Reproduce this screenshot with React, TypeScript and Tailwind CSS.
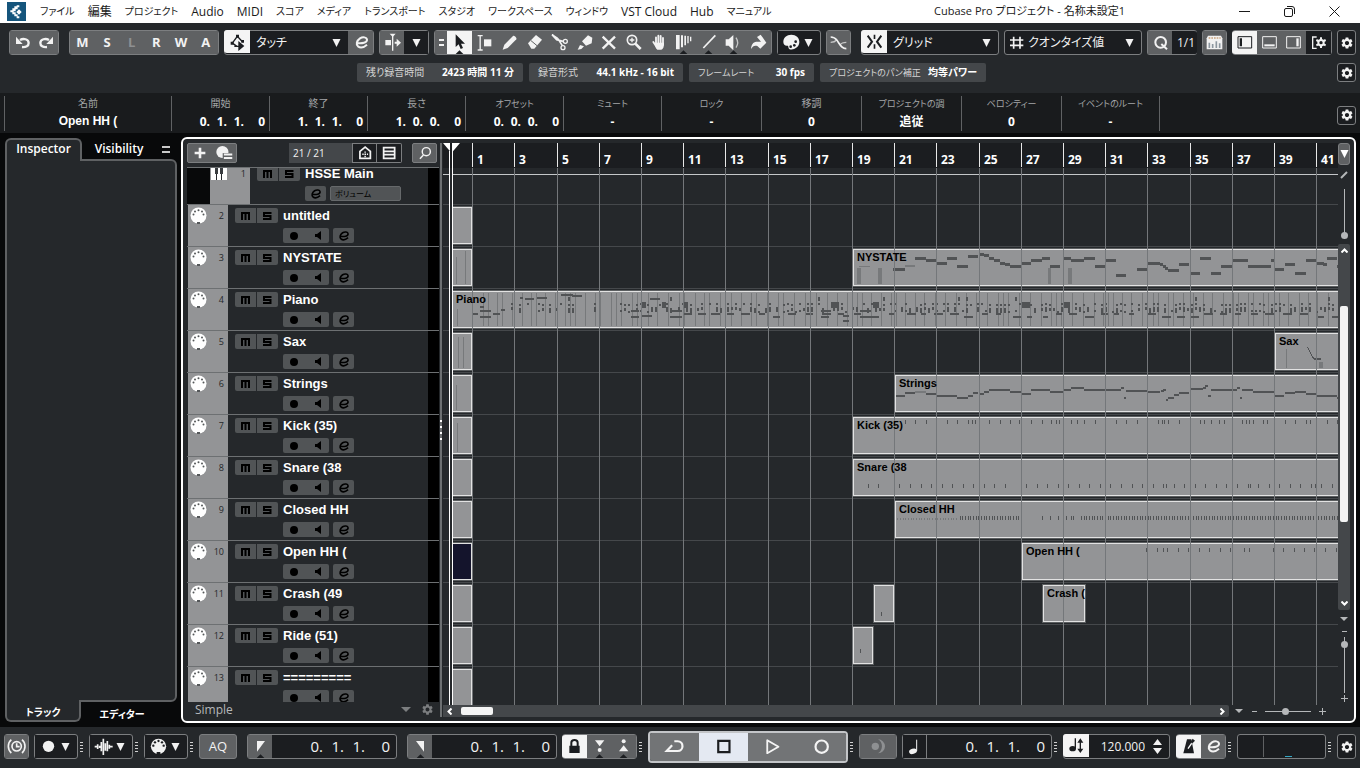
import React from 'react';
import clsx from 'clsx';
import { MdSettings } from 'react-icons/md';

interface Track {
  id: number;
  name: string;
}

interface Clip {
  lane: number;
  left: number;
  width?: number; // open-ended clips run to the right edge
  label?: string;
  selected?: boolean;
}

type Note = [x: number, width: number, y: number];

const MENU = [
  'ファイル', '編集', 'プロジェクト', 'Audio', 'MIDI', 'スコア', 'メディア', 'トランスポート',
  'スタジオ', 'ワークスペース', 'ウィンドウ', 'VST Cloud', 'Hub', 'マニュアル',
];

const TRACKS: Track[] = [
  { id: 2, name: 'untitled' },
  { id: 3, name: 'NYSTATE' },
  { id: 4, name: 'Piano' },
  { id: 5, name: 'Sax' },
  { id: 6, name: 'Strings' },
  { id: 7, name: 'Kick (35)' },
  { id: 8, name: 'Snare (38' },
  { id: 9, name: 'Closed HH' },
  { id: 10, name: 'Open HH (' },
  { id: 11, name: 'Crash (49' },
  { id: 12, name: 'Ride (51)' },
  { id: 13, name: '=========' },
];

// Timeline geometry, in pixels
const LANE_TOP = 37;
const LANE_H = 42;
const laneY = (track: number) => LANE_TOP + (track - 2) * LANE_H;
const BARS = Array.from({ length: 21 }, (_, i) => ({ bar: i * 2 + 1, x: Math.round(29.2 + i * 42.2) }));

const CLIPS: Clip[] = [
  ...[2, 3, 5, 6, 7, 8, 9, 10, 11, 12, 13].map((lane) => ({ lane, left: 9, width: 20, selected: lane === 10 })),
  { lane: 3, left: 410, label: 'NYSTATE' },
  { lane: 4, left: 9, label: 'Piano' },
  { lane: 5, left: 832, label: 'Sax' },
  { lane: 6, left: 452, label: 'Strings' },
  { lane: 7, left: 410, label: 'Kick (35)' },
  { lane: 8, left: 410, label: 'Snare (38' },
  { lane: 9, left: 452, label: 'Closed HH' },
  { lane: 10, left: 579, label: 'Open HH (' },
  { lane: 11, left: 431, width: 20 },
  { lane: 11, left: 600, width: 42, label: 'Crash (' },
  { lane: 12, left: 410, width: 20 },
];

const NYSTATE: Note[] = [
  [-21, 36, 418], [45, 33, 385], [78, 30, 391], [110, 30, 400], [141, 30, 385], [172, 32, 409], [204, 31, 379],
  [238, 14, 373], [252, 16, 376], [267, 16, 385], [283, 16, 391], [300, 15, 400], [314, 15, 403], [330, 33, 409],
  [363, 30, 400], [393, 33, 391], [426, 24, 385], [450, 30, 409], [489, 24, 385], [513, 39, 391], [552, 33, 385],
  [585, 30, 409], [615, 33, 391], [648, 30, 436], [711, 30, 418], [742, 38, 400], [780, 8, 403], [788, 10, 409],
  [795, 9, 415], [804, 33, 421], [837, 30, 403], [870, 30, 430], [900, 33, 385], [933, 30, 430], [963, 33, 409],
  [997, 47, 391], [1044, 69, 409], [1113, 9, 391], [1122, 30, 418], [1155, 30, 403], [1185, 33, 430],
  [1218, 31, 391], [1250, 22, 400], [1270, 11, 404], [1281, 30, 385], [1311, 5, 409],
];

const STRINGS: Note[] = [
  [168, 27, 77], [195, 31, 70], [258, 31, 71], [289, 62, 78], [351, 33, 84], [384, 15, 77], [399, 15, 69],
  [418, 15, 71], [432, 15, 65], [447, 63, 60], [510, 34, 65], [544, 29, 72], [573, 57, 60], [630, 39, 65],
  [669, 24, 60], [693, 39, 53], [732, 111, 60], [843, 9, 53], [852, 6, 83], [858, 63, 63], [921, 39, 65],
  [963, 8, 63], [970, 8, 59], [978, 6, 90], [984, 18, 84], [1002, 15, 74], [1017, 30, 69], [1050, 39, 56],
  [1089, 8, 53], [1095, 9, 47], [1104, 9, 77], [1113, 78, 60], [1191, 9, 53], [1200, 6, 84], [1206, 33, 60],
  [1239, 63, 65], [1303, 29, 78], [1335, 30, 69], [1365, 33, 65], [1398, 30, 71], [1429, 62, 78], [1490, 4, 84],
];

const steps = (from: number, to: number, step: number) =>
  Array.from({ length: Math.floor((to - from) / step) + 1 }, (_, i) => from + i * step);

const HITS: { lane: number; y: number; x: number[] }[] = [
  {
    lane: 7, y: 5,
    x: [196, 226, 259, 289, 322, 352, 385, 397, 406, 448, 481, 511, 538, 543, 574, 607, 634, 649, 657, 670, 694, 712,
      733, 766, 796, 829, 859, 892, 922, 955, 967, 973, 985, 1018, 1051, 1081, 1093, 1114, 1138, 1153, 1177, 1207,
      1219, 1228, 1240, 1270, 1282, 1303, 1336, 1366, 1399, 1411, 1429, 1462, 1492],
  },
  {
    lane: 8, y: 27,
    x: [85, 115, 178, 211, 244, 274, 307, 337, 370, 400, 433, 463, 496, 559, 592, 622, 655, 685, 718, 748, 781, 811,
      844, 877, 907, 940, 970, 979, 1003, 1033, 1066, 1096, 1129, 1159, 1192, 1225, 1231, 1255, 1288, 1318, 1351,
      1381, 1414, 1426, 1444, 1477],
  },
  { lane: 9, y: 17, x: [...steps(360, 536, 8), 607, 631, 655, 670, 679, 694, 700, ...steps(724, 1492, 8)] },
  {
    lane: 10, y: 7,
    x: [919, 952, 970, 982, 1015, 1045, 1078, 1108, 1141, 1171, 1213, 1228, 1300, 1330, 1363, 1393, 1423, 1456, 1489],
  },
  { lane: 11, y: 29, x: [124] },
  { lane: 12, y: 24, x: [61] },
];

// Repeatable pseudo random piano part: pedal lines, chords and a bass line
function buildPiano() {
  let seed = 11;
  const rand = () => {
    seed = (seed * 16807) % 2147483647;
    return seed / 2147483647;
  };
  const pedal: number[] = [];
  const notes: { x: number; y: number; w: number; h: number }[] = [];
  for (let x = 40; x < 895; x += rand() < 0.25 ? 5 : 9 + Math.floor(rand() * 3)) pedal.push(x);
  for (let x = 57; x < 893; x += rand() < 0.3 ? 7 : 4) {
    const sparse = x < 190 && rand() < 0.5;
    const top = 14 + Math.floor(rand() * 2);
    [top, top + 4, top + 7].forEach((y, i) => {
      if (!sparse && rand() < 0.68) notes.push({ x, y, w: 2, h: i === 1 ? 3 : 2 });
    });
    if (rand() < 0.05) notes.push({ x, y: 8, w: 2, h: 4 });
  }
  for (let x = 240; x < 890; x += 13 + Math.floor(rand() * 6)) {
    notes.push({ x, y: rand() < 0.6 ? 24 : 27, w: 5 + Math.floor(rand() * 5), h: 2 });
  }
  [
    [29, 24, 6], [37, 17, 4], [37, 21, 11], [37, 27, 11], [50, 24, 7], [58, 20, 4], [77, 8, 3], [82, 9, 9], [94, 8, 10],
    [118, 5, 12], [129, 6, 10], [188, 21, 8], [188, 27, 8], [207, 9, 10], [198, 26, 11], [227, 21, 12], [227, 27, 12],
    [378, 21, 8], [378, 27, 8], [400, 26, 6], [400, 31, 6], [417, 21, 11], [417, 27, 11],
  ].forEach(([x, y, w]) => notes.push({ x, y, w, h: 2 }));
  [[198, 5], [219, 4], [240, 5], [388, 8], [430, 6], [578, 9], [621, 6]].forEach(([x, w]) => notes.push({ x, y: 13, w, h: 6 }));
  return { pedal, notes };
}

const PIANO = buildPiano();

/* ---------- icons, all on a 75 unit cell ---------- */

const Svg = ({ children, size = 23, className }: { children: React.ReactNode; size?: number; className?: string }) => (
  <svg viewBox="3 3 69 69" width={size} height={size} className={clsx('shrink-0', className)} fill="none" stroke="currentColor" strokeWidth="5" aria-hidden="true">
    {children}
  </svg>
);

const Notch = () => <path d="M25 73 37.500 61 50 73z" fill="#1b1d20" stroke="none" />;

const Down = ({ className }: { className?: string }) => (
  <svg viewBox="0 0 9 8" width="9" height="8" fill="currentColor" className={clsx('shrink-0', className)} aria-hidden="true">
    <path d="M.5 0h8l-4 8z" />
  </svg>
);

const icons = {
  undo: <><path d="M30 30c10-6 26-3 26 9 0 9-8 13-20 12" strokeWidth="7" /><path d="M18 20v22h20z" fill="currentColor" stroke="none" /></>,
  redo: <><path d="M45 30c-10-6-26-3-26 9 0 9 8 13 20 12" strokeWidth="7" /><path d="M57 20v22H37z" fill="currentColor" stroke="none" /></>,
  auto: <><path d="M36 52 22 42 37 22l16 17M28 52h14" strokeWidth="4" /><path d="m40 36 18 15-18 15z" fill="currentColor" stroke="none" /><path d="M17 38h9v9h-9zM33 17h9v9h-9zM49 33h8v8h-8z" fill="currentColor" stroke="none" /></>,
  edit: <path d="M27 39c15 2 31-1 30-10-1-8-13-9-21-4-10 7-13 18-6 24 8 6 19 2 27-5" strokeWidth="6" />,
  follow: <><path d="M38 12v50" strokeWidth="4" /><path d="M16 30h17v16H16zM44 35h6v-9l13 12-13 12v-9h-6zM29 11h18l-9 10z" fill="currentColor" stroke="none" /></>,
  pointer: <><path d="M26 13v38l9-8 6 14 7-3-6-13h12z" fill="currentColor" stroke="none" /><Notch /></>,
  range: <><path d="M17 17h15M24.500 17v43M17 60h15" strokeWidth="4" /><path d="M36 28h22v21H36z" fill="currentColor" stroke="none" /></>,
  pencil: <path d="m17 59 5-15 26-26c3-3 13 6 10 10L32 54z" fill="currentColor" stroke="none" />,
  eraser: <><path d="M18 40 42 15l18 14-23 27H28z" fill="currentColor" stroke="none" /><path d="m27 32 18 15" stroke="#5f6163" strokeWidth="3" /></>,
  scissors: <><path d="m15 14 14 15 19 5M32 25l14 22M15 14l17 11" strokeWidth="5" /><circle cx="55" cy="34" r="6" strokeWidth="4" /><circle cx="48" cy="53" r="6" strokeWidth="4" /></>,
  glue: <path d="m17 59 7-14 12 4-8 8zM30 34l18-18 13 7-2 17-17 7z" fill="currentColor" stroke="none" />,
  mute: <path d="m20 20 37 36M57 20 20 56" strokeWidth="7" />,
  zoom: <><circle cx="33" cy="30" r="14" strokeWidth="5" /><path d="m43 41 16 16" strokeWidth="8" /><path d="M26 30h14M33 23v14" strokeWidth="4" /></>,
  hand: <><path d="M30 44V22M37 42V17M44 42V18M51 44V24M22 36l8 12" strokeWidth="5.500" strokeLinecap="round" /><path d="M26 38h28c1 11-3 19-8 21H34c-4-3-8-10-8-21z" fill="currentColor" stroke="none" /></>,
  comp: <><path d="M15 15h11v43H15zM30 16h6v36h-6zM40 17h5v29h-5zM49 18h4v22h-4zM57 20h4v14h-4z" fill="currentColor" stroke="none" /><Notch /></>,
  line: <><path d="m22 54 36-38" /><Notch /></>,
  play: <><path d="M14 28h9l14-13v46L23 47h-9z" fill="currentColor" stroke="none" /><path d="M45 23q10 15 0 30" strokeWidth="4" opacity=".7" /><Notch /></>,
  bucket: <path d="M33 21 44 14l17 24-18 18-9-8c-8-3-14 0-19 9 1-13 6-21 16-22h14z" fill="currentColor" stroke="none" />,
  palette: <><path d="M37 14c-14 0-24 9-24 22 0 8 6 13 14 11l1 4c1 7 6 9 13 7 12-3 20-11 20-22 0-13-10-22-24-22z" fill="currentColor" stroke="none" /><g fill="#1b1d20" stroke="none"><circle cx="50" cy="35" r="4" /><circle cx="46" cy="46" r="4" /><circle cx="35" cy="50" r="4" /></g></>,
  fade: <><path d="M14 21c8 0 14 3 19 10 9 13 14 25 28 25" strokeWidth="5" /><path d="M14 37c8 0 12 0 18-7M42 45c4-6 10-8 19-8" strokeWidth="4" opacity=".7" /></>,
  snap: <><path d="M17 20 30 38 17 56M58 20 45 38l13 18" strokeWidth="6" /><path d="M37.500 17v13M37.500 46v13" strokeWidth="5" /></>,
  hash: <path d="M29 20v36M48 20v36M18 30h40M18 46h40" strokeWidth="5" />,
  q: <><circle cx="38" cy="37" r="16" strokeWidth="6" /><path d="m40 42 17 16" strokeWidth="6" /></>,
  keys: <><path d="M18 17h39l4 8v33H14V25z" fill="#f2f2f2" stroke="none" /><path d="M22 38v16M32 42v12M43 34v20M53 40v14" stroke="#8d97a0" strokeWidth="5" /><path d="M20 24h36" stroke="#c9a37c" strokeWidth="4" strokeDasharray="5 3" /></>,
  zoneL: <><path d="M18 20h41v34H18z" strokeWidth="3" /><path d="M23 25h7v24h-7z" fill="currentColor" stroke="none" /></>,
  zoneB: <><path d="M17 20h41v34H17z" strokeWidth="3" /><path d="M22 43h31v6H22z" fill="currentColor" stroke="none" /></>,
  zoneR: <><path d="M17 20h41v34H17z" strokeWidth="3" /><path d="M46 25h7v24h-7z" fill="currentColor" stroke="none" /></>,
  zoneSet: <><path d="M32 21H20v34h12" strokeWidth="4" /><circle cx="45" cy="38" r="8" strokeWidth="6" /><path d="M45 22v7M45 47v7M31 30l6 3M53 43l6 3M31 46l6-3M53 33l6-3" strokeWidth="6" /></>,
  plus: <path d="M37.500 19v37M19 37.500h37" strokeWidth="9" />,
  preset: <><circle cx="32" cy="34" r="21" fill="currentColor" stroke="none" /><path d="M33 38h39v26H33z" fill="#5f6163" stroke="none" /><path d="M37 43h29M37 55h29" strokeWidth="7" /></>,
  home: <><path d="M20 56V32l18-15 18 15v24z" strokeWidth="6" /><path d="M28 42h20M38 32v20" strokeWidth="5" strokeDasharray="5 3" /></>,
  list: <><path d="M19 19h38v37H19z" strokeWidth="6" /><path d="M19 31.500h38M19 43.500h38" strokeWidth="6" /></>,
  find: <><circle cx="42" cy="33" r="14" strokeWidth="5" /><path d="M32 44 20 57" strokeWidth="5" /></>,
  clock: <><circle cx="38" cy="37" r="14" strokeWidth="5" /><path d="M38 28v10h9M22 17c-12 10-12 30 0 40M54 17c12 10 12 30 0 40" strokeWidth="5" /></>,
  record: <circle cx="37.500" cy="37" r="17" fill="currentColor" stroke="none" />,
  wave: <path d="M11 38h8M20 31v14M26 35v7M31 24v28M37 14v49M43 28v22M49 21v31M55 32v12M57 38h8" strokeWidth="5" />,
  midi: <><circle cx="37.500" cy="37" r="23" fill="currentColor" stroke="none" /><g fill="#1b1d20" stroke="none"><circle cx="22" cy="35" r="3.500" /><circle cx="27" cy="25" r="3.500" /><circle cx="37.500" cy="21" r="3.500" /><circle cx="48" cy="25" r="3.500" /><circle cx="53" cy="35" r="3.500" /><path d="M32 54h11v7H32z" /></g></>,
  locL: <><path d="M27 21h24L27 53z" fill="currentColor" stroke="none" /><Notch /></>,
  locR: <><path d="M48 21H24l24 32z" fill="currentColor" stroke="none" /><Notch /></>,
  lock: <><path d="M22 35h31v22H22z" fill="currentColor" stroke="none" /><path d="M28 36V26c0-11 19-11 19 0v10" strokeWidth="6" /></>,
  punchIn: <><path d="M24 19h28L38 37z" fill="currentColor" stroke="none" /><circle cx="38" cy="48" r="6" fill="currentColor" stroke="none" /><Notch /></>,
  punchOut: <><path d="M24 52h28L38 34z" fill="currentColor" stroke="none" /><circle cx="38" cy="22" r="6" fill="currentColor" stroke="none" /><Notch /></>,
  cycle: <path d="m31 34-15 16h30c18 0 18-27 0-27h-9" strokeWidth="6" />,
  stop: <path d="M23 22h31v31H23z" strokeWidth="6" />,
  start: <path d="M23 20v36l31-18z" strokeWidth="5" strokeLinejoin="round" />,
  rec: <circle cx="38" cy="38" r="17" strokeWidth="6" />,
  moon: <><path d="M36 16a21 21 0 1 1 0 42c16-9 16-33 0-42z" fill="currentColor" stroke="none" /><circle cx="28" cy="37" r="11" fill="currentColor" stroke="none" /></>,
  quarter: <><ellipse cx="33" cy="52" rx="12" ry="8" fill="currentColor" stroke="none" transform="rotate(-18 33 52)" /><path d="M44 17v34" strokeWidth="3" /></>,
  tempo: <><ellipse cx="26" cy="47" rx="10" ry="8" fill="currentColor" stroke="none" /><path d="M34 16v31M49 22v32" strokeWidth="4" /><path d="m40 29 9-13 9 13zM40 47l9 13 9-13z" fill="currentColor" stroke="none" /></>,
  metro: <><path d="M33 16h13l8 42H22z" fill="currentColor" stroke="none" /><path d="M36 44 51 22" stroke="#fff" strokeWidth="4" /><path d="m48 29 9-9-7-6-6 9z" fill="currentColor" stroke="none" /></>,
};

type IconName = keyof typeof icons;

/* ---------- small building blocks ---------- */

const Cell = ({ icon, label, tone = 'mid', first, children }: {
  icon?: IconName;
  label: string;
  tone?: 'mid' | 'dark' | 'on' | 'off';
  first?: boolean;
  children?: React.ReactNode;
}) => (
  <button
    type="button"
    aria-label={label}
    className={clsx(
      'flex h-full min-w-0 flex-1 items-center justify-center overflow-hidden text-[13px] font-bold',
      tone === 'mid' && 'bg-[#5f6163] text-[#f2f2f2]',
      tone === 'off' && 'bg-[#5f6163] text-[#8e9092]',
      tone === 'dark' && 'bg-[#1b1d20] text-[#f2f2f2]',
      tone === 'on' && '-my-px h-[25px] bg-[#f4f4f4] text-[#1b1d20]',
      first && '-ml-px rounded-l-[3px]',
    )}
  >
    {icon && <Svg>{icons[icon]}</Svg>}
    {children}
  </button>
);

const Group = ({ className, children }: { className: string; children: React.ReactNode }) => (
  <div className={clsx('flex h-[25px] shrink-0 items-center rounded-[3px] border border-[#7c7e80] bg-[#1b1d20]', className)}>
    {children}
  </div>
);

const Picker = ({ label, value }: { label: string; value: string }) => (
  <div className="relative flex h-full min-w-0 flex-1 items-center">
    <select aria-label={label} className="h-full w-full appearance-none bg-transparent pl-1.5 pr-5 text-[12px] text-[#f2f2f2]">
      <option>{value}</option>
    </select>
    <Down className="pointer-events-none absolute right-[7px] text-[#f2f2f2]" />
  </div>
);

const SettingsButton = ({ label, className }: { label: string; className?: string }) => (
  <button type="button" aria-label={label} className={clsx('flex w-[19px] shrink-0 items-center justify-center rounded-[3px] border border-[#7c7e80] bg-[#1b1d20] text-[#f2f2f2]', className)}>
    <MdSettings size={14} />
  </button>
);

const Grip = () => (
  <div className="flex w-[11px] shrink-0 flex-col items-center gap-0.5 pr-1">
    {[0, 1, 2, 3].map((i) => <span key={i} className="h-px w-[3px] bg-[#d0d0d0]" />)}
  </div>
);

const Position = ({ values, wide }: { values: string[]; wide?: boolean }) => (
  <div className={clsx('flex w-full justify-end', wide ? 'pr-1.5' : 'pr-1')}>
    {values.map((v, i) => (
      <span key={i} className={clsx(i > 0 && 'text-right', i > 0 && i < 3 && (wide ? 'w-[21px]' : 'w-[17px]'), i === 3 && (wide ? 'w-[25px]' : 'w-[21px]'))}>
        {v}
      </span>
    ))}
  </div>
);

/* ---------- page sections ---------- */

const MenuBar = () => (
  <header className="flex h-[23px] shrink-0 items-center bg-white text-[12px] text-[#1a1a1a]">
    <svg viewBox="0 0 57 57" className="ml-[7px] mr-[14px] size-[19px] shrink-0" aria-hidden="true">
      <path d="M0 0h57v57H0z" fill="#15557c" />
      <path d="M29 10h8v6h-5v6h-6v6h-6v3h6v6h6v6h5v6h-8v-6h-7v-6h-6v-6h-6v-6h6v-6h6v-6h7z" fill="#fff" />
      <path d="m36 22 8 8-8 8-8-8z" fill="#fff" />
    </svg>
    <nav className="flex items-center gap-[13px]">
      {MENU.map((m) => (
        <button key={m} type="button" className={clsx('whitespace-nowrap', /[ァ-ヶ]/.test(m) && 'text-[10px]')}>{m}</button>
      ))}
    </nav>
    <h1 className="ml-auto mr-[114px] whitespace-nowrap text-[11px]">Cubase Pro プロジェクト - 名称未設定1</h1>
    <div className="mr-5 flex items-center gap-[34px]">
      <button type="button" aria-label="最小化"><svg width="11" height="11" stroke="currentColor" aria-hidden="true"><path d="M0 5.500h11" /></svg></button>
      <button type="button" aria-label="元に戻す"><svg width="11" height="11" fill="none" stroke="currentColor" aria-hidden="true"><rect x=".5" y="2.500" width="8" height="8" rx="1.500" /><path d="M3 .5h5q2.500 0 2.500 2.500v5" /></svg></button>
      <button type="button" aria-label="閉じる"><svg width="11" height="11" stroke="currentColor" aria-hidden="true"><path d="m.5.5 10 10m0-10-10 10" /></svg></button>
    </div>
  </header>
);

const TOOLS: { icon: IconName; label: string }[] = [
  { icon: 'range', label: '範囲選択' }, { icon: 'pencil', label: '鉛筆' }, { icon: 'eraser', label: '消しゴム' },
  { icon: 'scissors', label: 'はさみ' }, { icon: 'glue', label: 'のり' }, { icon: 'mute', label: 'ミュート' },
  { icon: 'zoom', label: 'ズーム' }, { icon: 'hand', label: 'ハンド' }, { icon: 'comp', label: 'コンプ' },
  { icon: 'line', label: 'ライン' }, { icon: 'play', label: '再生' }, { icon: 'bucket', label: 'カラー' },
];

const Toolbar = () => (
  <div className="flex h-8 shrink-0 items-end pl-[9px] pr-1">
    <Group className="mr-2.5 w-[50px]">
      <Cell icon="undo" label="元に戻す" />
      <Cell icon="redo" label="再実行" />
    </Group>
    <Group className="mr-[5px] w-[150px]">
      {['M', 'S', 'L', 'R', 'W', 'A'].map((c) => <Cell key={c} label={c} tone={c === 'L' ? 'off' : 'mid'}>{c}</Cell>)}
    </Group>
    <Group className="mr-[5px] w-[150px]">
      <div className="flex h-[23px] w-[25px]"><Cell icon="auto" label="オートメーション" tone="on" first /></div>
      <Picker label="オートメーションモード" value="タッチ" />
      <div className="flex h-[23px] w-[25px]"><Cell icon="edit" label="オートメーションパネル" /></div>
    </Group>
    <Group className="mr-[5px] w-[50px]">
      <Cell icon="follow" label="自動スクロール" />
      <Cell label="自動スクロール設定" tone="dark"><Down /></Cell>
    </Group>
    <Group className="mr-[5px] w-[338px]">
      <div className="flex h-full w-3 flex-col items-center justify-center gap-[3px] bg-[#5f6163]">
        <span className="h-0.5 w-[5px] bg-[#f2f2f2]" />
        <span className="h-0.5 w-[5px] bg-[#f2f2f2]" />
      </div>
      <Cell icon="pointer" label="選択" tone="on" />
      {TOOLS.map((t) => <Cell key={t.icon} {...t} />)}
    </Group>
    <Group className="mr-[5px] w-[44px]">
      <Cell icon="palette" label="カラー" tone="dark" />
      <Down className="mr-[7px] text-[#f2f2f2]" />
    </Group>
    <Group className="mr-2.5 w-[25px]"><Cell icon="fade" label="クロスフェード" /></Group>
    <Group className="mr-[5px] w-[138px]">
      <div className="flex h-[23px] w-[25px]"><Cell icon="snap" label="スナップ" tone="on" first /></div>
      <Picker label="スナップタイプ" value="グリッド" />
    </Group>
    <Group className="mr-[5px] w-[138px] text-[#f2f2f2]">
      <Svg className="-mr-1.5">{icons.hash}</Svg>
      <Picker label="グリッドタイプ" value="クオンタイズ値" />
    </Group>
    <Group className="mr-[5px] w-[50px] border-r-0">
      <Cell icon="q" label="クオンタイズ" />
      <span className="w-[25px] overflow-hidden pl-[5px] text-[12px] text-[#f2f2f2]">1/1</span>
    </Group>
    <Group className="mr-[5px] w-[25px]"><Cell icon="keys" label="メディアベイ" /></Group>
    <Group className="w-[100px]">
      <Cell icon="zoneL" label="左ゾーン" tone="on" first />
      <Cell icon="zoneB" label="下ゾーン" />
      <Cell icon="zoneR" label="右ゾーン" />
      <Cell icon="zoneSet" label="レイアウト設定" tone="dark" />
    </Group>
    <SettingsButton label="ツールバー設定" className="ml-auto h-[25px]" />
  </div>
);

const STATUS = [
  { label: '残り録音時間', value: '2423 時間 11 分', width: 'w-[166px]' },
  { label: '録音形式', value: '44.1 kHz - 16 bit', width: 'w-[154px]' },
  { label: 'フレームレート', value: '30 fps', width: 'w-[125px]' },
  { label: 'プロジェクトのパン補正', value: '均等パワー', width: 'w-[166px]' },
];

const StatusLine = () => (
  <div className="flex h-[38px] shrink-0 pr-1 pt-2">
    <div className="flex min-w-0 flex-1 justify-center gap-1.5 pl-1.5">
      {STATUS.map((s) => (
        <div key={s.label} className={clsx('flex h-[19px] items-center justify-between whitespace-nowrap rounded-[2px] bg-[#44474a] px-[9px] text-[10px]', s.width)}>
          <span className={clsx('text-[#d4d4d4]', /[ァ-ヶ]/.test(s.label) && 'text-[9px]')}>{s.label}</span>
          <span className="font-bold text-white">{s.value}</span>
        </div>
      ))}
    </div>
    <SettingsButton label="ステータスライン設定" className="h-[19px]" />
  </div>
);

const INFO: { label: string; value: string | string[]; width: string }[] = [
  { label: '名前', value: 'Open HH (', width: 'w-[167px]' },
  { label: '開始', value: ['0.', '1.', '1.', '0'], width: 'w-[98px]' },
  { label: '終了', value: ['1.', '1.', '1.', '0'], width: 'w-[98px]' },
  { label: '長さ', value: ['1.', '0.', '0.', '0'], width: 'w-[98px]' },
  { label: 'オフセット', value: ['0.', '0.', '0.', '0'], width: 'w-[98px]' },
  { label: 'ミュート', value: '-', width: 'w-[98px]' },
  { label: 'ロック', value: '-', width: 'w-[100px]' },
  { label: '移調', value: '0', width: 'w-[100px]' },
  { label: 'プロジェクトの調', value: '追従', width: 'w-[100px]' },
  { label: 'ベロシティー', value: '0', width: 'w-[100px]' },
  { label: 'イベントのルート', value: '-', width: 'w-[98px]' },
];

const InfoLine = () => (
  <div className="flex h-10 shrink-0 items-center bg-[#191b1d] pl-1 pr-1">
    <dl className="flex h-[35px] border-l border-[#606264]">
      {INFO.map((c) => (
        <div key={c.label} className={clsx('flex flex-col items-center gap-[3px] border-r border-[#606264]', c.width)}>
          <dt className={clsx('leading-[15px] text-[#a4a6a8]', /[ァ-ヶ]/.test(c.label) ? 'text-[9px]' : 'text-[10px]')}>{c.label}</dt>
          <dd className="flex w-full justify-center text-[12px] leading-[15px] font-bold text-white">
            {Array.isArray(c.value) ? <Position values={c.value} /> : c.label === '名前' ? <span className="font-['Liberation_Sans']">{c.value}</span> : c.value}
          </dd>
        </div>
      ))}
    </dl>
    <SettingsButton label="情報ライン設定" className="mt-1 ml-auto h-[19px]" />
  </div>
);

const Inspector = () => (
  <aside className="my-px flex w-[172px] shrink-0 flex-col text-[12px] font-semibold text-white">
    <div className="flex h-[21px] shrink-0">
      <button type="button" className="relative z-10 -mb-0.5 w-[77px] rounded-t-md border-2 border-b-0 border-[#5f6163] bg-[#25282b] pb-1">Inspector</button>
      <button type="button" className="w-[74px]">Visibility</button>
      <span className="ml-1.5 mt-2 flex flex-col gap-[3px]">
        <i className="h-0.5 w-2 bg-[#c8c8c8]" />
        <i className="h-0.5 w-2 bg-[#c8c8c8]" />
      </span>
    </div>
    <div className="flex-1 rounded-tr-md rounded-br-md border-2 border-[#5f6163] bg-[#25282b]" />
    <div className="flex h-5 shrink-0 text-[10px] font-bold">
      <button type="button" className="relative -mt-0.5 w-[76px] rounded-b-md border-2 border-t-0 border-[#5f6163] bg-[#25282b] pt-1">トラック</button>
      <button type="button" className="w-[82px] pt-1">エディター</button>
    </div>
  </aside>
);

const MuteSolo = () => (
  <div className="flex h-[15px] gap-px text-black">
    <button type="button" aria-label="ミュート" className="flex w-[21px] items-center justify-center rounded-l-[2px] bg-[#515456]">
      <svg width="9" height="8" fill="none" stroke="currentColor" strokeWidth="2" aria-hidden="true"><path d="M1 8V1h7v7M4.500 1v7" /></svg>
    </button>
    <button type="button" aria-label="ソロ" className="flex w-[21px] items-center justify-center rounded-r-[2px] bg-[#515456]">
      <svg width="9" height="8" fill="none" stroke="currentColor" strokeWidth="2" aria-hidden="true"><path d="M8.500 1H1v3h6.500v3H0" /></svg>
    </button>
  </div>
);

const EditButton = () => (
  <button type="button" aria-label="チャンネル設定" className="flex h-[15px] w-[21px] items-center justify-center rounded-[2px] bg-[#515456] pr-0.5 text-black">
    <Svg size={18}>{icons.edit}</Svg>
  </button>
);

const TrackRow = ({ track }: { track: Track }) => (
  <li className="flex h-[42px] shrink-0 border-b border-[#6d7072] pl-px">
    <div className="flex w-10 shrink-0 items-start bg-[#939496] pl-[2px] pt-0.5 text-[#25282b]">
      <svg viewBox="0 0 17 17" width="17" height="17" className="shrink-0 text-white" aria-hidden="true">
        <circle cx="8.500" cy="8.500" r="8" fill="currentColor" />
        <g fill="#55585a">
          <circle cx="3.500" cy="7.500" r="1" /><circle cx="5" cy="4.500" r="1" /><circle cx="8.500" cy="3.200" r="1" />
          <circle cx="12" cy="4.500" r="1" /><circle cx="13.500" cy="7.500" r="1" /><path d="M7 15h3v2H7z" />
        </g>
      </svg>
      <span className="ml-auto pr-1 text-[9px] leading-[17px]">{track.id}</span>
    </div>
    <div className="ml-[7px] pt-[3px]"><MuteSolo /></div>
    <div className="ml-[5px] flex min-w-0 flex-1 flex-col">
      <span className="truncate font-['Liberation_Sans'] text-[13px] leading-[21px] font-bold text-white">{track.name}</span>
      <div className="mt-0.5 flex gap-1">
        <button type="button" aria-label="録音可能 / モニタリング" className="flex h-[15px] w-[46px] items-center justify-between rounded-[2px] bg-[#515456] pl-[7px] pr-2 text-black">
          <svg width="8" height="8" fill="currentColor" aria-hidden="true"><circle cx="4" cy="4" r="4" /></svg>
          <svg width="6" height="9" fill="currentColor" aria-hidden="true"><path d="M0 3h2l4-3v9L2 6H0z" /></svg>
        </button>
        <EditButton />
      </div>
    </div>
    <div className="w-[11px] shrink-0 bg-black" />
  </li>
);

const TrackList = () => (
  <section className="flex w-[253px] shrink-0 flex-col">
    <div className="flex h-6 shrink-0 items-start">
      <div className="flex h-5 w-[50px] rounded-[2px] border border-[#7c7e80] bg-[#5f6163] text-[#f2f2f2]">
        <button type="button" aria-label="トラックを追加" className="flex flex-1 items-center justify-center"><Svg size={20}>{icons.plus}</Svg></button>
        <button type="button" aria-label="プリセットから追加" className="flex flex-1 items-center justify-center"><Svg size={20}>{icons.preset}</Svg></button>
      </div>
      <div className="ml-[52px] flex h-5 w-[113px] rounded-[2px] text-[#f2f2f2]">
        <span className="flex flex-1 items-center bg-[#44474a] pl-1 text-[10px]">21 / 21</span>
        <button type="button" aria-label="ゾーン分割" className="flex w-[25px] items-center justify-center border border-[#7c7e80] bg-[#1b1d20]"><Svg size={20}>{icons.home}</Svg></button>
        <button type="button" aria-label="トラック設定" className="flex w-[25px] items-center justify-center rounded-r-[2px] border border-l-0 border-[#7c7e80] bg-[#1b1d20]"><Svg size={20}>{icons.list}</Svg></button>
      </div>
      <button type="button" aria-label="トラックを検索" className="ml-2.5 flex h-5 w-[25px] items-center justify-center rounded-[2px] border border-[#7c7e80] bg-[#5f6163] text-[#f2f2f2]"><Svg size={20}>{icons.find}</Svg></button>
    </div>
    <ul className="mr-px flex min-h-0 flex-1 flex-col overflow-hidden border-t border-[#6d7072]">
      <li className="-mt-[5px] flex h-[42px] shrink-0 border-b border-[#6d7072]">
        <div className="w-[23px] shrink-0 bg-[#08090a]" />
        <div className="flex w-10 shrink-0 items-start bg-[#939496] pl-px text-[#25282b]">
          <svg width="16" height="17" className="shrink-0" aria-hidden="true"><path d="M0 0h16v17H0z" fill="#fff" /><path d="M5.500 0v17M10.500 0v17" stroke="#25282b" /><path d="M4 0h3v11H4zM9 0h3v11H9z" fill="#3a3d40" /></svg>
          <span className="ml-auto pr-1 text-[9px] leading-[21px]">1</span>
        </div>
        <div className="ml-[7px] pt-[3px]"><MuteSolo /></div>
        <div className="ml-[5px] flex flex-1 flex-col">
          <span className="font-['Liberation_Sans'] text-[13px] leading-[21px] font-bold text-white">HSSE Main</span>
          <div className="mt-0.5 flex gap-1">
            <EditButton />
            <button type="button" className="flex h-[15px] w-[71px] items-center rounded-[2px] border border-[#66696b] bg-[#515456] pl-1 text-[8px] text-black">ボリューム</button>
          </div>
        </div>
        <div className="w-[11px] shrink-0 bg-black" />
      </li>
      {TRACKS.map((t) => <TrackRow key={t.id} track={t} />)}
    </ul>
    <div className="flex h-[15px] shrink-0 items-center pl-2 pr-1.5 text-[12px] text-[#b5b7b9]">
      <span>Simple</span>
      <svg width="10" height="5" fill="currentColor" className="mr-2.5 ml-auto text-[#7c7e80]" aria-hidden="true"><path d="M0 0h10L5 5z" /></svg>
      <MdSettings size={13} className="text-[#7c7e80]" />
    </div>
  </section>
);

const Ruler = () => (
  <div className="relative h-[25px] shrink-0 overflow-hidden bg-[#1b1d20]">
    {BARS.map(({ bar, x }) => (
      <span key={bar} className="absolute top-0 h-6 border-l border-[#e8e8e8] pl-1 pt-[9px] text-[12px] leading-[15px] font-bold text-white" style={{ left: x }}>{bar}</span>
    ))}
    <svg width="18" height="25" className="absolute top-0 left-0" aria-hidden="true">
      <path d="M0 0h17L8.500 10z" fill="#fff" />
      <path d="M8 0v25" stroke="#1b1d20" strokeWidth="2" />
      <path d="M6.500 8v17M9.500 8v17" stroke="#fff" />
    </svg>
  </div>
);

const NoteLayer = () => (
  <svg className="pointer-events-none absolute inset-0 size-full" shapeRendering="crispEdges" aria-hidden="true">
    <g fill="#77797b">
      {PIANO.pedal.map((x) => <rect key={x} x={x} y={laneY(4) + 4} width="1" height="33" />)}
      {[[3, 13, 10], [3, 22, 4], [4, 14, 20], [5, 15, 6], [5, 20, 6], [6, 13, 12], [7, 14, 8], [5, 843, 18]].map(([lane, x, y]) => (
        <rect key={`${lane}-${x}`} x={x} y={laneY(lane) + y} width="1" height={37 - y} />
      ))}
      {[[414, 4], [435, 4], [605, 3], [625, 4]].map(([x, w]) => <rect key={x} x={x} y={laneY(3) + 21} width={w} height="16" />)}
      <rect x="416" y={laneY(3) + 19} width="11" height="1" />
      {steps(172, 350, 8).map((t) => <rect key={t} x={397 + t / 3} y={laneY(9) + 19} width="1" height="2" />)}
      <rect x="462" y={laneY(3) + 18} width="10" height="2" />
      <rect x="472" y={laneY(6) + 18} width="11" height="2" />
      <rect x="876" y={laneY(5) + 31} width="4" height="6" />
    </g>
    <g fill="#515355">
      {NYSTATE.map(([t, w, y], i) => <rect key={i} x={457 + t / 3} y={laneY(3) + y / 3 - 118.500} width={w / 3} height="3" />)}
      {STRINGS.map(([t, w, y], i) => <rect key={i} x={397 + t / 3} y={laneY(6) + y / 3 - 4} width={w / 3} height="2" />)}
      {HITS.map(({ lane, y, x }) => x.map((t) => <rect key={`${lane}-${t}`} x={Math.floor(397 + t / 3)} y={laneY(lane) + y} width="1" height="4" />))}
      {PIANO.notes.map((n, i) => <rect key={i} x={n.x} y={laneY(4) + n.y} width={n.w} height={n.h} />)}
      <path d={`M864.500 ${laneY(5) + 16}l3 6 4 7`} stroke="#515355" fill="none" />
      <rect x="871" y={laneY(5) + 27} width="7" height="2" />
    </g>
    <g fill="#74777a">
      {BARS.map(({ x }) => <rect key={x} x={x} y="0" width="1" height="100%" />)}
    </g>
  </svg>
);

const Arrange = () => (
  <div className="relative min-h-0 flex-1 overflow-hidden bg-[#25282b]">
    <svg className="absolute inset-0 size-full" shapeRendering="crispEdges" aria-hidden="true">
      {steps(36, 498, 42).map((y) => <rect key={y} x="0" y={y} width="100%" height="1" fill="#45484b" />)}
      <rect x="0" y="6" width="100%" height="1" fill="#c5c7c9" />
    </svg>
    {CLIPS.map((c) => (
      <div
        key={`${c.lane}-${c.left}`}
        className={clsx(
          'absolute h-[37px] border border-[#e2e2e2] outline outline-[#5b5e60]',
          c.selected ? 'bg-[#14142c]' : 'bg-[#939496]',
          c.width === undefined && 'right-0 border-r-0',
        )}
        style={{ left: c.left, top: laneY(c.lane) + 2, width: c.width }}
      />
    ))}
    <NoteLayer />
    {CLIPS.filter((c) => c.label).map((c) => (
      <span
        key={`${c.lane}-${c.left}`}
        className="absolute pl-1 font-['Liberation_Sans'] text-[11px] leading-4 font-bold whitespace-nowrap text-black"
        style={{ left: c.left, top: laneY(c.lane) + 2 }}
      >
        {c.label}
      </span>
    ))}
    <div className="absolute inset-y-0 left-[6px] w-1 border-x border-white bg-[#25282b]" />
  </div>
);

const HScroll = () => (
  <div className="flex h-3 shrink-0 items-center text-[#b5b7b9]">
    <div className="flex h-3 min-w-0 flex-1 items-center rounded-r-[2px] bg-[#44474a] px-1 text-white">
      <svg width="5" height="7" fill="none" stroke="currentColor" strokeWidth="2" aria-hidden="true"><path d="M4.500.5 1.500 3.500l3 3" /></svg>
      <div className="ml-[9px] h-2 w-8 rounded-[2px] bg-[#f4f4f4]" />
      <svg width="5" height="7" fill="none" stroke="currentColor" strokeWidth="2" className="ml-auto" aria-hidden="true"><path d="m.5.5 3 3-3 3" /></svg>
    </div>
    <svg width="8" height="4" fill="currentColor" className="ml-1.5" aria-hidden="true"><path d="M0 0h8L4 4z" /></svg>
    <span className="ml-[9px] h-px w-[5px] bg-[#b5b7b9]" />
    <input
      type="range"
      aria-label="水平ズーム"
      defaultValue={44}
      className="ml-2 h-2 w-[46px] appearance-none bg-transparent [&::-webkit-slider-runnable-track]:h-px [&::-webkit-slider-runnable-track]:bg-[#b5b7b9] [&::-webkit-slider-thumb]:-mt-[3px] [&::-webkit-slider-thumb]:size-[7px] [&::-webkit-slider-thumb]:appearance-none [&::-webkit-slider-thumb]:rounded-full [&::-webkit-slider-thumb]:bg-[#b5b7b9]"
    />
    <svg width="7" height="7" stroke="currentColor" className="mr-3 ml-2" aria-hidden="true"><path d="M3.500 0v7M0 3.500h7" /></svg>
  </div>
);

const VRange = ({ label, value, className }: { label: string; value: number; className: string }) => (
  <input
    type="range"
    aria-label={label}
    defaultValue={value}
    className={clsx(
      'w-2 appearance-none bg-transparent [writing-mode:vertical-lr] [&::-webkit-slider-runnable-track]:w-px [&::-webkit-slider-runnable-track]:bg-[#b5b7b9] [&::-webkit-slider-thumb]:-ml-[3px] [&::-webkit-slider-thumb]:size-[7px] [&::-webkit-slider-thumb]:appearance-none [&::-webkit-slider-thumb]:rounded-full [&::-webkit-slider-thumb]:bg-[#b5b7b9]',
      className,
    )}
  />
);

const VScroll = () => (
  <div className="mr-1 flex w-3 shrink-0 flex-col items-center text-[#b5b7b9]">
    <button type="button" aria-label="ルーラー設定" className="flex h-[22px] w-3 shrink-0 items-center justify-center rounded-[3px] border border-[#7c7e80] bg-[#5f6163] text-white"><Down /></button>
    <svg width="8" height="8" stroke="currentColor" strokeWidth="2" className="mt-1.5 shrink-0" aria-hidden="true"><path d="m1 7 6-6" /></svg>
    <VRange label="トラックの高さ" value={100} className="mt-2.5 h-[50px] shrink-0" />
    <div className="mt-[5px] flex min-h-0 w-3 flex-1 flex-col items-center rounded-[2px] bg-[#44474a] py-1 text-white">
      <svg width="7" height="5" fill="none" stroke="currentColor" strokeWidth="2" className="shrink-0" aria-hidden="true"><path d="m.5 4.500 3-3 3 3" /></svg>
      <div className="mt-[53px] h-[216px] w-2 rounded-[2px] bg-[#f4f4f4]" />
      <svg width="7" height="5" fill="none" stroke="currentColor" strokeWidth="2" className="mt-auto shrink-0" aria-hidden="true"><path d="m.5.5 3 3 3-3" /></svg>
    </div>
    <svg width="8" height="4" fill="currentColor" className="mt-[7px] shrink-0" aria-hidden="true"><path d="M0 0h8L4 4z" /></svg>
    <span className="mt-2.5 h-px w-[5px] shrink-0 bg-[#b5b7b9]" />
    <VRange label="垂直ズーム" value={9} className="mt-[5px] h-14 shrink-0" />
    <svg width="7" height="7" stroke="currentColor" className="mt-0.5 mb-[15px] shrink-0" aria-hidden="true"><path d="M3.500 0v7M0 3.500h7" /></svg>
  </div>
);

const ProjectZone = () => (
  <main className="flex min-w-0 flex-1 rounded-md border-2 border-white bg-[#25282b] py-1 pl-1">
    <TrackList />
    <div className="mr-px flex w-0.5 shrink-0 flex-col justify-center gap-1 bg-[#6d7072]">
      {[0, 1, 2, 3].map((i) => <span key={i} className="h-0.5 w-0.5 bg-white" />)}
    </div>
    <section className="flex min-w-0 flex-1 flex-col">
      <Ruler />
      <Arrange />
      <HScroll />
    </section>
    <VScroll />
  </main>
);

const InputMenu = ({ icon, label }: { icon: IconName; label: string }) => (
  <Group className="w-[44px]">
    <Cell icon={icon} label={label} tone="dark" />
    <Down className="mr-[7px] text-[#f2f2f2]" />
  </Group>
);

const Locator = ({ icon, label, className }: { icon: IconName; label: string; className?: string }) => (
  <Group className={clsx('w-[150px] text-[15px] text-[#f2f2f2]', className)}>
    <div className={clsx('flex h-[23px] w-6 shrink-0', icon === 'quarter' && 'border-r border-[#7c7e80]')}>
      <Cell icon={icon} label={label} tone={icon === 'quarter' ? 'dark' : 'mid'} />
    </div>
    <Position values={['0.', '1.', '1.', '0']} wide />
  </Group>
);

const TRANSPORT: { icon: IconName; label: string }[] = [
  { icon: 'cycle', label: 'サイクル' }, { icon: 'stop', label: '停止' }, { icon: 'start', label: '再生' }, { icon: 'rec', label: '録音' },
];

const TransportBar = () => (
  <footer className="flex h-[41px] shrink-0 items-center bg-[#25282b] pr-1 pb-0.5 pl-1">
    <Group className="mr-[5px] w-[25px]"><Cell icon="clock" label="オーディオ遅延補正" /></Group>
    <InputMenu icon="record" label="録音モード" />
    <Grip />
    <InputMenu icon="wave" label="オーディオ録音モード" />
    <Grip />
    <InputMenu icon="midi" label="MIDI 録音モード" />
    <Grip />
    <button type="button" className="mr-2.5 h-[25px] w-[38px] shrink-0 rounded-[3px] border border-[#7c7e80] bg-[#5f6163] text-[13px] text-[#f2f2f2]">AQ</button>
    <Locator icon="locL" label="左ロケーター" className="mr-2.5" />
    <Locator icon="locR" label="右ロケーター" className="mr-[5px]" />
    <Group className="w-[75px]">
      <Cell icon="lock" label="ロケーターをロック" tone="on" first />
      <Cell icon="punchIn" label="パンチイン" />
      <Cell icon="punchOut" label="パンチアウト" />
    </Group>
    <Grip />
    <div className="flex h-8 w-[200px] shrink-0 overflow-hidden rounded-[4px] border-2 border-[#c3c5c8]">
      {TRANSPORT.map((t) => (
        <button key={t.icon} type="button" aria-label={t.label} className={clsx('flex flex-1 items-center justify-center', t.icon === 'stop' ? 'bg-[#e4e9f2] text-[#1b1d20]' : 'bg-[#727476] text-[#f4f4f4]')}>
          <Svg size={25}>{icons[t.icon]}</Svg>
        </button>
      ))}
    </div>
    <Grip />
    <Group className="mr-[5px] w-[38px]"><Cell icon="moon" label="プリロール" tone="off" /></Group>
    <Locator icon="quarter" label="小節と拍" />
    <Grip />
    <Group className="mr-1.5 w-[107px] text-[#f2f2f2]">
      <div className="flex h-[23px] w-[25px] shrink-0"><Cell icon="tempo" label="テンポトラック" tone="on" first /></div>
      <input aria-label="テンポ" defaultValue="120.000" className="min-w-0 flex-1 bg-transparent pr-2 text-right text-[12px]" />
      <svg width="9" height="15" fill="currentColor" className="mr-[7px] shrink-0" aria-hidden="true"><path d="M0 6h9L4.500 0zM0 9h9l-4.500 6z" /></svg>
    </Group>
    <Group className="w-[50px]">
      <Cell icon="metro" label="メトロノーム" tone="on" first />
      <Cell icon="edit" label="メトロノーム設定" />
    </Group>
    <Grip />
    <Group className="w-[89px]">
      <div className="ml-[25px] h-[21px] w-px bg-[#5f6163]" />
      <div className="mt-5 ml-[21px] h-px w-[7px] bg-[#35a7c4]" />
    </Group>
    <Grip />
    <SettingsButton label="トランスポート設定" className="ml-auto h-[25px]" />
  </footer>
);

export default function App() {
  return (
    <div lang="ja" className="flex h-screen flex-col overflow-hidden bg-[#25282b] font-['Open_Sans','Noto_Sans_CJK_JP',sans-serif] [font-feature-settings:'palt']">
      <MenuBar />
      <Toolbar />
      <StatusLine />
      <InfoLine />
      <div className="flex min-h-0 flex-1 gap-1 bg-[#08090a] py-1 pr-1 pl-[5px]">
        <Inspector />
        <ProjectZone />
      </div>
      <TransportBar />
    </div>
  );
}
